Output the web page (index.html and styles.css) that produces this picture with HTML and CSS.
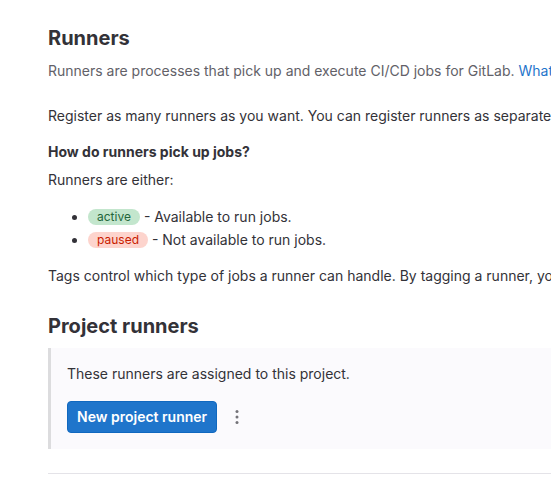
FILE: index.html
```html
<!DOCTYPE html>
<html>
<head>
<meta charset="utf-8">
<link rel="stylesheet" href="styles.css">
</head>
<body>
<div class="page">
  <h1 class="title">Runners</h1>
  <p class="subtitle">Runners are processes that pick up and execute CI/CD jobs for GitLab. <a class="link" href="#">What is GitLab Runner?</a></p>
  <p class="para reg">Register as many runners as you want. You can register runners as separate users, on separate servers, and on your local machine.</p>
  <p class="para strong">How do runners pick up jobs?</p>
  <p class="para either">Runners are either:</p>
  <ul class="list">
    <li><span class="badge active">active</span> - Available to run jobs.</li>
    <li><span class="badge paused">paused</span> - Not available to run jobs.</li>
  </ul>
  <p class="para tags">Tags control which type of jobs a runner can handle. By tagging a runner, you make sure shared runners only handle the jobs they are equipped to run.</p>
  <h2 class="section">Project runners</h2>
  <div class="box">
    <p class="box-text">These runners are assigned to this project.</p>
    <div class="actions">
      <button class="btn-primary">New project runner</button>
      <button class="btn-kebab" aria-label="More">
        <svg width="16" height="16" viewBox="0 0 16 16"><circle cx="8" cy="2.5" r="1.5" fill="#737278"/><circle cx="8" cy="8" r="1.5" fill="#737278"/><circle cx="8" cy="13.5" r="1.5" fill="#737278"/></svg>
      </button>
    </div>
  </div>
  <div class="rule"></div>
</div>
</body>
</html>
```
FILE: styles.css
```css
html, body {
  margin: 0;
  padding: 0;
  background: #fff;
  overflow: hidden;
}
body {
  font-family: Inter, "Noto Sans", sans-serif;
  font-size: 14px;
  line-height: 20px;
  color: #333238;
}
.page {
  padding-left: 48px;
  width: 1200px;
  white-space: nowrap;
}
.title {
  margin: 26px 0 0;
  font-size: 20px;
  line-height: 24px;
  font-weight: 700;
}
.subtitle {
  margin: 11px 0 0;
  color: #626168;
}
.link {
  color: #1f75cb;
  text-decoration: none;
}
.para {
  margin: 0;
}
.reg { margin-top: 25px; }
.strong { margin-top: 16px; font-weight: 700; }
.either { margin-top: 8px; }
.list {
  margin: 15px 0 0;
  padding-left: 40px;
}
.list li {
  line-height: 23px;
}
.badge {
  display: inline-block;
  font-size: 12px;
  line-height: 16px;
  padding: 0 9px;
  border-radius: 8px;
  vertical-align: 1px;
}
.active { background: #c3e6cd; color: #24663b; }
.paused { background: #fdd4cd; color: #c91c00; }
.tags { margin-top: 15px; }
.section {
  margin: 28px 0 0;
  font-size: 20px;
  line-height: 24px;
  font-weight: 700;
}
.box {
  margin-top: 10px;
  background: #fbfafd;
  border-left: 3px solid #dcdcde;
  padding: 16px 16px 16px 16px;
}
.box-text { margin: 0; }
.actions {
  margin-top: 17px;
  display: flex;
  gap: 4px;
  align-items: center;
}
.btn-primary {
  font-family: inherit;
  font-size: 14px;
  font-weight: 600;
  line-height: 20px;
  color: #fff;
  background: #1f75cb;
  border: 1px solid #1068bf;
  border-radius: 4px;
  padding: 5px 9px;
  height: 32px;
}
.btn-kebab {
  width: 32px;
  height: 32px;
  border: 0;
  background: transparent;
  padding: 0;
  display: flex;
  align-items: center;
  justify-content: center;
}
.rule {
  margin-top: 24px;
  border-top: 1px solid #e4e3e8;
}
```
